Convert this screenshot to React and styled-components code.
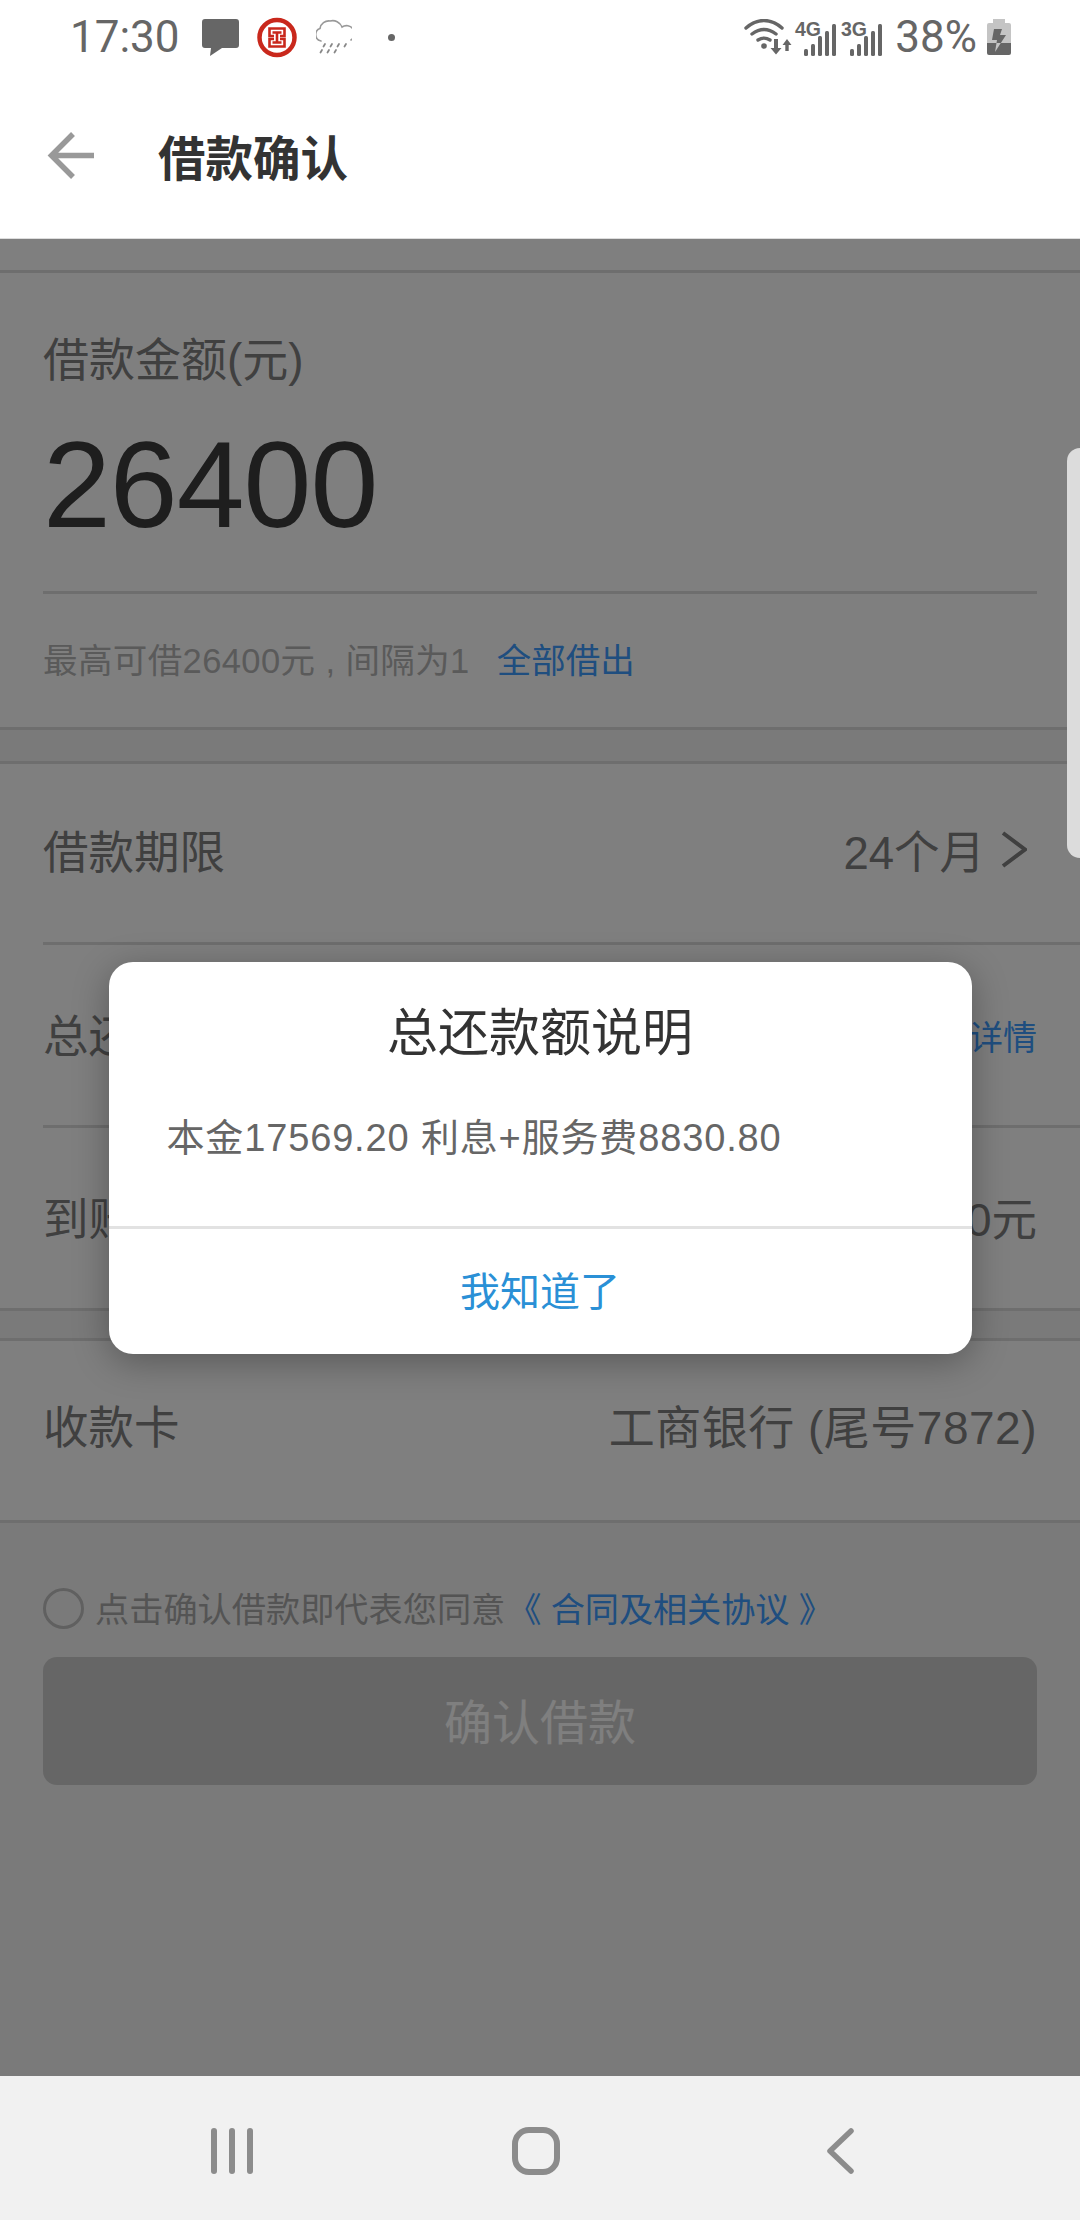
import React from "react";
import styled, { createGlobalStyle } from "styled-components";

const Global = createGlobalStyle`
  html, body { margin: 0; padding: 0; background: #fff; }
  * { box-sizing: border-box; }
  body { font-family: "Liberation Sans", "Noto Sans CJK SC", sans-serif; }
`;

const Screen = styled.div`
  position: relative;
  width: 1080px;
  height: 2220px;
  display: flex;
  flex-direction: column;
  overflow: hidden;
  background: #fff;
`;

const StatusBar = styled.div`
  height: 80px;
  flex: none;
  display: flex;
  align-items: center;
  justify-content: space-between;
  padding: 0 69px 6px 70px;
  color: #666;
`;
const StatusGroup = styled.div`
  display: flex;
  align-items: center;
`;
const StatusText = styled.span`
  font-family: Roboto, sans-serif;
  font-size: 44px;
  line-height: 48px;
  color: #666;
  margin-left: ${(p) => p.$ml || 0}px;
`;

const Header = styled.div`
  height: 159px;
  flex: none;
  display: flex;
  align-items: center;
  padding: 0 0 8px 47px;
  background: #fff;
  border-bottom: 1px solid #ddd;
`;
const Title = styled.h1`
  margin: 0 0 0 63px;
  font-size: 47.5px;
  font-weight: 700;
  color: #333;
`;

const Content = styled.main`
  position: relative;
  flex: 1;
  background: #f5f5f5;
  display: flex;
  flex-direction: column;
`;
const Gap = styled.div`
  height: ${(p) => p.$h}px;
  background: ${(p) => p.$bg || "transparent"};
`;
const Card = styled.section`
  background: #fff;
  border-top: 3px solid #dcdcdc;
  border-bottom: 3px solid #dcdcdc;
`;
const AmountCard = styled(Card)`
  padding: 0 43px;
  height: 460px;
`;
const AmountLabel = styled.div`
  font-size: 46px;
  line-height: 60px;
  color: #808080;
  padding-top: 57px;
  height: 117px;
`;
const Amount = styled.div`
  font-size: 122px;
  line-height: 140px;
  height: 201px;
  padding-top: 25px;
  color: #3c3c3c;
  letter-spacing: -1px;
`;
const InnerLine = styled.div`
  height: 3px;
  background: #dcdcdc;
`;
const Hint = styled.div`
  display: flex;
  align-items: center;
  gap: 27px;
  height: 128px;
  font-size: 34.5px;
  color: #b4b4b4;
`;
const HintText = styled.span`
  letter-spacing: 0.4px;
`;
const Link = styled.span`
  color: #3f9cff;
`;
const Row = styled.div`
  height: ${(p) => p.$h}px;
  margin-left: 43px;
  padding: 0 43px ${(p) => p.$pb}px 0;
  display: flex;
  align-items: center;
  justify-content: space-between;
  font-size: 45.5px;
  color: #808080;
  border-top: ${(p) => (p.$line ? "3px solid #dcdcdc" : "0")};
`;
const Small = styled.span`
  font-size: 34px;
  padding-top: 5px;
  color: #3f9cff;
`;
const Chevron = styled.svg`
  width: 26px;
  height: 37px;
  margin: 0 10px 0 16px;
  flex: none;
`;
const Value = styled.span`
  display: flex;
  align-items: center;
`;
const CardValue = styled.span`
  font-size: 46px;
  letter-spacing: 0.5px;
`;

const Agreement = styled.div`
  display: flex;
  align-items: center;
  height: 41px;
  margin: 65px 43px 0;
  font-size: 34.2px;
  color: #a8a8a8;
`;
const Radio = styled.span`
  width: 41px;
  height: 41px;
  border-radius: 50%;
  border: 3px solid #c0c0c0;
  margin-right: 11px;
  flex: none;
`;
const AgreeText = styled.span`
  padding-bottom: 4px;
`;
const AgreeLink = styled.span`
  color: #3f9cff;
  margin-left: 2px;
  padding-bottom: 4px;
  letter-spacing: -0.1px;
`;
const Confirm = styled.div`
  height: 128px;
  margin: 28px 43px 0;
  padding-bottom: 5px;
  background: #cdcdcd;
  border-radius: 14px;
  display: flex;
  align-items: center;
  justify-content: center;
  font-size: 48px;
  color: #fff;
`;

const Overlay = styled.div`
  position: absolute;
  inset: 0;
  background: rgba(0, 0, 0, 0.5);
  display: flex;
  align-items: center;
  justify-content: center;
`;
const Dialog = styled.div`
  width: 863px;
  height: 392px;
  background: #fff;
  border-radius: 24px;
  box-shadow: 0 8px 36px rgba(0, 0, 0, 0.3);
  display: flex;
  flex-direction: column;
`;
const DialogTitle = styled.div`
  height: 138px;
  padding-bottom: 3px;
  display: flex;
  align-items: center;
  justify-content: center;
  font-size: 51px;
  color: #333;
`;
const DialogBody = styled.div`
  height: 129px;
  padding: 13px 0 0 58px;
  font-size: 38px;
  letter-spacing: 0.85px;
  line-height: 50px;
  color: #666;
  border-bottom: 3px solid #e2e2e2;
`;
const DialogAction = styled.div`
  flex: 1;
  padding-bottom: 5px;
  display: flex;
  align-items: center;
  justify-content: center;
  font-size: 40px;
  color: #2a90d6;
`;

const EdgeHandle = styled.div`
  position: absolute;
  top: 448px;
  right: 0;
  width: 13px;
  height: 410px;
  background: #dcdcdc;
  border-radius: 14px 0 0 14px;
`;

const NavBar = styled.nav`
  height: 144px;
  flex: none;
  background: #f1f1f1;
  display: grid;
  grid-template-columns: repeat(3, 304px);
  padding: 6px 0 0 80px;
  align-items: center;
  justify-items: center;
`;

const Dot = styled.span`
  width: 7px;
  height: 7px;
  border-radius: 50%;
  background: #666;
  margin-left: 36px;
`;

const IconSlot = styled.span`
  display: flex;
  margin-left: ${(p) => p.$ml || 0}px;
`;

const MessageIcon = () => (
  <svg width="37" height="37" viewBox="0 0 37 37">
    <path d="M3 0h31a3 3 0 0 1 3 3v23a3 3 0 0 1-3 3H20l-12 8 1-8H3a3 3 0 0 1-3-3V3a3 3 0 0 1 3-3z" fill="#666" />
  </svg>
);

const BankIcon = () => (
  <svg width="40" height="41" viewBox="0 0 40 41">
    <circle cx="20" cy="20.500" r="17.500" fill="#fff" stroke="#c9281c" strokeWidth="4.500" />
    <path d="M17 19H12.500V11.500H27.500V19H23M17 22H12.500V29.500H27.500V22H23M15.500 15.500H24.500M20 15.500V25.500M15.500 25.500H24.500" fill="none" stroke="#c9281c" strokeWidth="2.600" />
  </svg>
);

const RainIcon = () => (
  <svg width="36" height="36" viewBox="0 0 36 36">
    <path d="M5 22a6.500 6.500 0 0 1-1-12.500A9 9 0 0 1 14 2a10 10 0 0 1 12 6 7.500 7.500 0 0 1 9 13" fill="none" stroke="#999" strokeWidth="1.600" strokeLinecap="round" />
    <path d="M9 25l-1.500 2.500M16 25l-1.500 2.500M23 25l-1.500 2.500M30 25l-1.500 2.500M6 31l-1.500 2.500M13 31l-1.500 2.500M20 31l-1.500 2.500" stroke="#888" strokeWidth="1.800" strokeLinecap="round" />
  </svg>
);

const WifiIcon = () => (
  <svg width="48" height="36" viewBox="0 0 48 36">
    <g fill="none" stroke="#666" strokeWidth="3.400" strokeLinecap="round">
      <path d="M2 9C13-1 27-1 38 9" />
      <path d="M8 15c8-6 16-6 24 0" />
      <path d="M14 21c4-2.500 8-2.500 12 0" />
    </g>
    <circle cx="20" cy="27" r="2.800" fill="#666" />
    <path d="M32 35.500l-5.500-6.500h3.500v-9h4v9h3.500zM43 20l4.500 6h-2.800v6h-3.400v-6h-2.800z" fill="#666" />
  </svg>
);

const SignalFrame = styled.svg`
  overflow: visible;
`;

const Signal = ({ label }) => (
  <SignalFrame width="42" height="38" viewBox="0 -2 42 38">
    <text x="0" y="16" fontFamily="Liberation Sans, sans-serif" fontWeight="700" fontSize="19.500" fill="#666">{label}</text>
    <g fill="#666">
      <rect x="9" y="29" width="4" height="7" rx="1.500" />
      <rect x="16" y="24" width="4" height="12" rx="1.500" />
      <rect x="23" y="16" width="4" height="20" rx="1.500" />
      <rect x="30" y="11" width="4" height="25" rx="1.500" />
      <rect x="37" y="4" width="4" height="32" rx="1.500" />
    </g>
  </SignalFrame>
);

const BatteryIcon = () => (
  <svg width="24" height="36" viewBox="0 0 24 36">
    <path d="M6 0h12v4h4a2 2 0 0 1 2 2v18H0V6a2 2 0 0 1 2-2h4z" fill="#c4c4c4" />
    <path d="M0 24h24v10a2 2 0 0 1-2 2H2a2 2 0 0 1-2-2z" fill="#666" />
    <path d="M7 10H15L13 16H19L8 33L10 21H5Z" fill="#666" />
    <path d="M9.500 24H13.800L8 33Z" fill="#c4c4c4" />
  </svg>
);

const BackArrow = () => (
  <svg width="48" height="49" viewBox="0 0 48 49">
    <path d="M47 24.500H5M26 3L4.500 24.500 26 46" fill="none" stroke="#999" strokeWidth="5.500" />
  </svg>
);

const RecentsIcon = () => (
  <svg width="42" height="46" viewBox="0 0 42 46">
    <g fill="#8c8c8c">
      <rect x="0" y="0" width="6" height="46" rx="3" />
      <rect x="18" y="0" width="6" height="46" rx="3" />
      <rect x="36" y="0" width="6" height="46" rx="3" />
    </g>
  </svg>
);
const HomeIcon = () => (
  <svg width="48" height="48" viewBox="0 0 48 48">
    <rect x="3" y="3" width="42" height="42" rx="14" fill="none" stroke="#8c8c8c" strokeWidth="6" />
  </svg>
);
const NavBackIcon = () => (
  <svg width="27" height="46" viewBox="0 0 27 46">
    <path d="M24 3L3 23l21 20" fill="none" stroke="#8c8c8c" strokeWidth="5.500" strokeLinecap="round" strokeLinejoin="round" />
  </svg>
);

export default function App() {
  return (
    <>
      <Global />
      <Screen>
        <StatusBar>
          <StatusGroup>
            <StatusText>17:30</StatusText>
            <IconSlot $ml={22}><MessageIcon /></IconSlot>
            <IconSlot $ml={18}><BankIcon /></IconSlot>
            <IconSlot $ml={19}><RainIcon /></IconSlot>
            <Dot />
          </StatusGroup>
          <StatusGroup>
            <WifiIcon />
            <IconSlot $ml={3}><Signal label="4G" /></IconSlot>
            <IconSlot $ml={4}><Signal label="3G" /></IconSlot>
            <StatusText $ml={12}>38%</StatusText>
            <IconSlot $ml={10}><BatteryIcon /></IconSlot>
          </StatusGroup>
        </StatusBar>
        <Header>
          <BackArrow />
          <Title>借款确认</Title>
        </Header>
        <Content>
          <Gap $h={31} $bg="#fff" />
          <AmountCard>
            <AmountLabel>借款金额(元)</AmountLabel>
            <Amount>26400</Amount>
            <InnerLine />
            <Hint>
              <HintText>最高可借26400元 , 间隔为1</HintText>
              <Link>全部借出</Link>
            </Hint>
          </AmountCard>
          <Gap $h={31} />
          <Card>
            <Row $h={178} $pb={8}>
              <span>借款期限</span>
              <Value>
                24个月
                <Chevron viewBox="0 0 26 37">
                  <path d="M2 2l22 16.500L2 35" fill="none" stroke="#808080" strokeWidth="4" />
                </Chevron>
              </Value>
            </Row>
            <Row $line $h={183} $pb={4}>
              <span>总还款额</span>
              <Small>查看详情</Small>
            </Row>
            <Row $line $h={183} $pb={4}>
              <span>到账金额</span>
              <span>26400.00元</span>
            </Row>
          </Card>
          <Gap $h={27} />
          <Card>
            <Row $h={179} $pb={14}>
              <span>收款卡</span>
              <CardValue>工商银行 (尾号7872)</CardValue>
            </Row>
          </Card>
          <Agreement>
            <Radio />
            <AgreeText>点击确认借款即代表您同意</AgreeText>
            <AgreeLink>《 合同及相关协议 》</AgreeLink>
          </Agreement>
          <Confirm>确认借款</Confirm>
          <Overlay>
            <Dialog>
              <DialogTitle>总还款额说明</DialogTitle>
              <DialogBody>本金17569.20 利息+服务费8830.80</DialogBody>
              <DialogAction>我知道了</DialogAction>
            </Dialog>
          </Overlay>
        </Content>
        <NavBar>
          <RecentsIcon />
          <HomeIcon />
          <NavBackIcon />
        </NavBar>
        <EdgeHandle />
      </Screen>
    </>
  );
}
